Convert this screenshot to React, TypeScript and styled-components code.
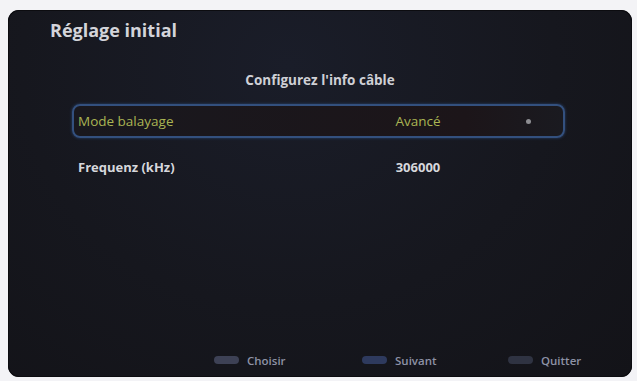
import React from "react";
import styled, { createGlobalStyle } from "styled-components";

const Styles = createGlobalStyle`
  html, body {
    margin: 0;
    padding: 0;
    background: #f3f3f6;
  }
  body {
    font-family: "Open Sans", "Noto Sans", sans-serif;
  }
`;

const Screen = styled.div`
  margin: 10px 5px 0 8px;
  width: 624px;
  height: 367px;
  border-radius: 11px;
  background: radial-gradient(ellipse at 45% 15%, #1a1d29 0%, #16171e 55%, #131318 100%);
  box-shadow: inset 0 0 0 1px #0c0c10;
  display: flex;
  flex-direction: column;
  box-sizing: border-box;
  overflow: hidden;
`;

const Title = styled.h1`
  margin: 0;
  padding: 8px 0 0 42px;
  font-size: 18px;
  font-weight: 700;
  color: #d3d4da;
`;

const Subtitle = styled.div`
  margin-top: 29px;
  text-align: center;
  font-size: 13.5px;
  font-weight: 700;
  color: #cfd0d6;
`;

const List = styled.div`
  margin: 15px 0 0 64px;
  width: 493px;
  display: flex;
  flex-direction: column;
  gap: 12px;
`;

const Row = styled.div<{ selected?: boolean }>`
  height: 34px;
  box-sizing: border-box;
  display: grid;
  grid-template-columns: 1fr 150px 70px;
  align-items: center;
  padding: 0 0 0 4px;
  border-radius: 8px;
  border: 2px solid ${(p) => (p.selected ? "#33507e" : "transparent")};
  background: ${(p) =>
    p.selected ? "linear-gradient(90deg, #19181e, #1c1519 80%, #1a1a20)" : "transparent"};
  box-shadow: ${(p) => (p.selected ? "0 0 3px #2a4470" : "none")};
  color: ${(p) => (p.selected ? "#aab453" : "#d6d7dc")};
  font-size: ${(p) => (p.selected ? "13.5px" : "13px")};
  font-weight: ${(p) => (p.selected ? 500 : 700)};
`;

const Value = styled.span`
  text-align: center;
`;

const Dot = styled.span`
  justify-self: center;
  width: 5px;
  height: 5px;
  border-radius: 50%;
  background: #8d8d92;
`;

const Footer = styled.div`
  margin-top: auto;
  height: 30px;
  display: flex;
  align-items: center;
  padding-left: 206px;
  padding-bottom: 2px;
`;

const Hint = styled.div<{ w: number }>`
  width: ${(p) => p.w}px;
  display: flex;
  align-items: center;
  gap: 8px;
  font-size: 11.5px;
  font-weight: 600;
  color: #8d92a6;
`;

const Key = styled.span<{ tone: string }>`
  width: 25px;
  height: 8px;
  border-radius: 4px;
  background: ${(p) => p.tone};
`;

const App = () => {
  return (
    <>
      <Styles />
      <Screen>
        <Title>Réglage initial</Title>
        <Subtitle>Configurez l'info câble</Subtitle>
        <List>
          <Row selected>
            <span>Mode balayage</span>
            <Value>Avancé</Value>
            <Dot />
          </Row>
          <Row>
            <span>Frequenz (kHz)</span>
            <Value>306000</Value>
            <span />
          </Row>
        </List>
        <Footer>
          <Hint w={148}>
            <Key tone="#3d4155" />
            Choisir
          </Hint>
          <Hint w={146}>
            <Key tone="#2e3a5e" />
            Suivant
          </Hint>
          <Hint w={90}>
            <Key tone="#2f3342" />
            Quitter
          </Hint>
        </Footer>
      </Screen>
    </>
  );
};

export default App;
